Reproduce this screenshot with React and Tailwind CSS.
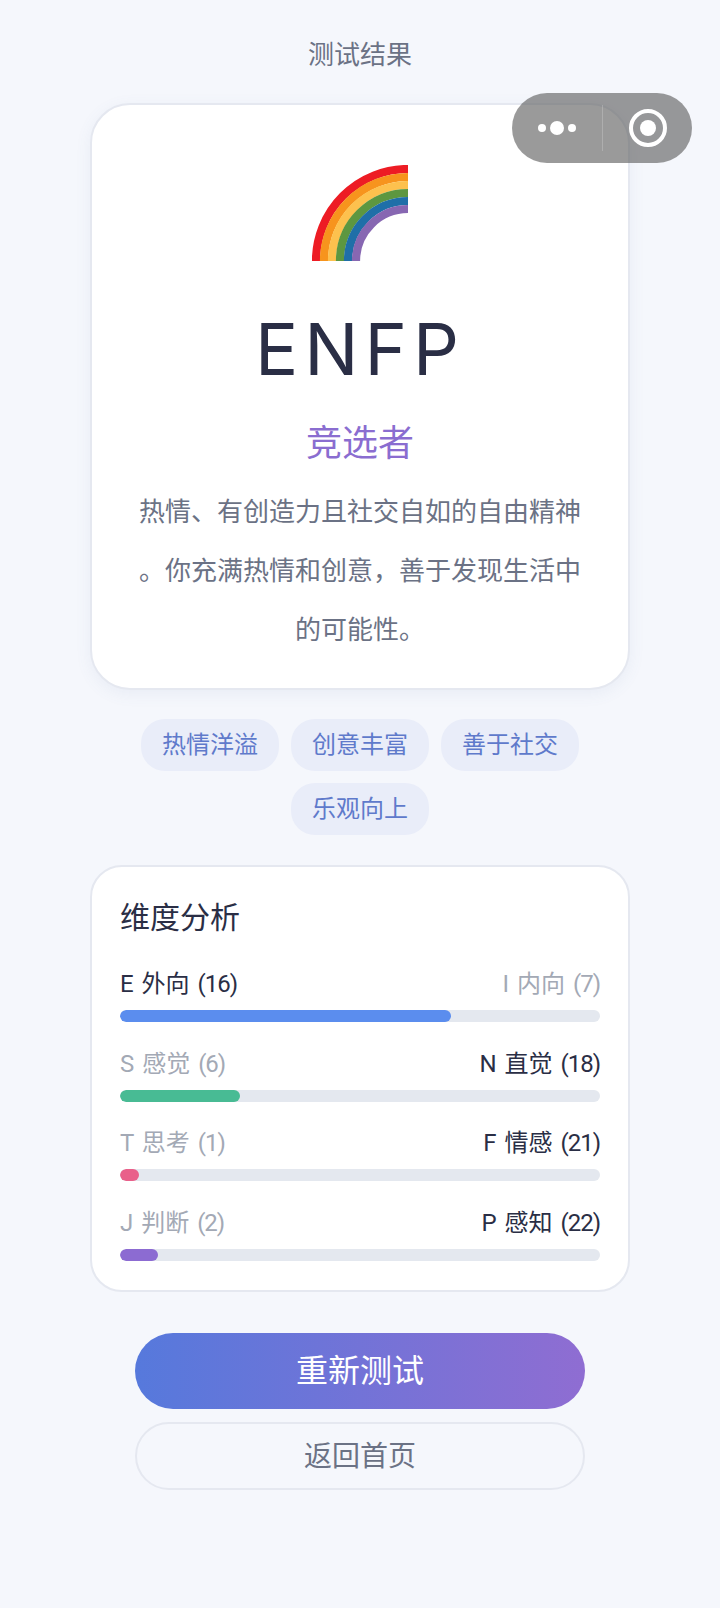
const FONT = "font-['Inter','Noto_Sans_CJK_SC',sans-serif]";

const bands = [
  [92, '#ed1c24'],
  [84, '#f7941d'],
  [76, '#fdc14e'],
  [68, '#5d9740'],
  [60, '#1f6fa8'],
  [52, '#8767b2'],
];

function Rainbow() {
  return (
    <svg width="96" height="96" viewBox="0 0 96 96" fill="none">
      {bands.map(([r, c]) => (
        <path key={r} d={`M${96 - r} 96A${r} ${r} 0 0 1 96 ${96 - r}`} stroke={c} strokeWidth="8.2" />
      ))}
    </svg>
  );
}

const rows = [
  { l: ['E 外向', '(16)'], r: ['I 内向', '(7)'], lOn: true, w: 69, c: 'bg-[#5b8dee]' },
  { l: ['S 感觉', '(6)'], r: ['N 直觉', '(18)'], lOn: false, w: 25, c: 'bg-[#48bb94]' },
  { l: ['T 思考', '(1)'], r: ['F 情感', '(21)'], lOn: false, w: 4, c: 'bg-[#e9608a]' },
  { l: ['J 判断', '(2)'], r: ['P 感知', '(22)'], lOn: false, w: 8, c: 'bg-[#8c6bd2]' },
];

function Label({ parts, on }) {
  return (
    <span className={on ? 'text-[#2a2e45]' : 'text-[#a3a9b5]'}>
      {parts[0]} <span className="tracking-[-1px]">{parts[1]}</span>
    </span>
  );
}

function Tag({ children }) {
  return (
    <div className="h-[52px] px-[21px] flex items-center rounded-[24px] bg-[#e9edf9] text-[#5f7acb] text-[24px] leading-none">
      {children}
    </div>
  );
}

export default function App() {
  return (
    <div className={`relative w-[720px] min-h-[1608px] bg-[#f5f7fc] flex flex-col items-center pt-[37px] ${FONT}`}>
      <div className="text-[26px] leading-[36px] text-[#6b7285]">测试结果</div>

      <div className="mt-[30px] w-[540px] h-[587px] bg-white border-2 border-[#e5e8f0] rounded-[40px] shadow-[0_4px_16px_rgba(90,110,160,0.08)] flex flex-col items-center pt-[60px] px-[46px]">
        <Rainbow />
        <div className="mt-[52px] text-[72px] leading-[72px] tracking-[6px] text-[#2a2e45]">ENFP</div>
        <div className="mt-[33px] text-[36px] leading-[50px] text-[#8a6dd0]">竞选者</div>
        <div className="mt-[14px] w-full text-center text-[26px] leading-[59px] text-[#6b7285] [line-break:anywhere]">
          热情、有创造力且社交自如的自由精神。你充满热情和创意，善于发现生活中的可能性。
        </div>
      </div>

      <div className="mt-[29px] w-[540px] flex flex-wrap justify-center gap-x-[12px] gap-y-[12px]">
        <Tag>热情洋溢</Tag>
        <Tag>创意丰富</Tag>
        <Tag>善于社交</Tag>
        <Tag>乐观向上</Tag>
      </div>

      <div className="mt-[30px] w-[540px] h-[427px] bg-white border-2 border-[#e5e8f0] rounded-[32px] px-[28px] pt-[30px]">
        <div className="text-[30px] leading-[40px] text-[#2a2e45]">维度分析</div>
        <div className="mt-[29px] flex flex-col gap-[23.7px]">
          {rows.map((x) => (
            <div key={x.l[0]}>
              <div className="flex justify-between text-[24px] leading-[36px] [word-spacing:2px] font-['Roboto','Noto_Sans_CJK_SC',sans-serif]">
                <Label parts={x.l} on={x.lOn} />
                <Label parts={x.r} on={!x.lOn} />
              </div>
              <div className="mt-[8px] h-[12px] rounded-full bg-[#e4e8ef] overflow-hidden">
                <div className={`h-full rounded-full ${x.c}`} style={{ width: `${x.w}%` }} />
              </div>
            </div>
          ))}
        </div>
      </div>

      <div className="mt-[41px] w-[450px] h-[76px] rounded-full bg-[linear-gradient(90deg,#5679dc,#8f6dd2)] text-white text-[32px] flex items-center justify-center">
        重新测试
      </div>
      <div className="mt-[13px] w-[450px] h-[68px] rounded-full border-2 border-[#e5e8f0] text-[#6b7285] text-[28px] flex items-center justify-center">
        返回首页
      </div>

      <div className="absolute left-[512px] top-[93px] w-[180px] h-[70px] rounded-full bg-[rgba(95,95,95,0.63)] flex items-center">
        <div className="w-[90px] flex items-center justify-center gap-[4px]">
          <span className="w-[8px] h-[8px] rounded-full bg-white" />
          <span className="w-[14px] h-[14px] rounded-full bg-white" />
          <span className="w-[8px] h-[8px] rounded-full bg-white" />
        </div>
        <div className="w-[1px] h-[46px] bg-white/20" />
        <div className="flex-1 flex justify-center">
          <div className="w-[38px] h-[38px] rounded-full border-4 border-white flex items-center justify-center">
            <div className="w-[16px] h-[16px] rounded-full bg-white" />
          </div>
        </div>
      </div>
    </div>
  );
}
